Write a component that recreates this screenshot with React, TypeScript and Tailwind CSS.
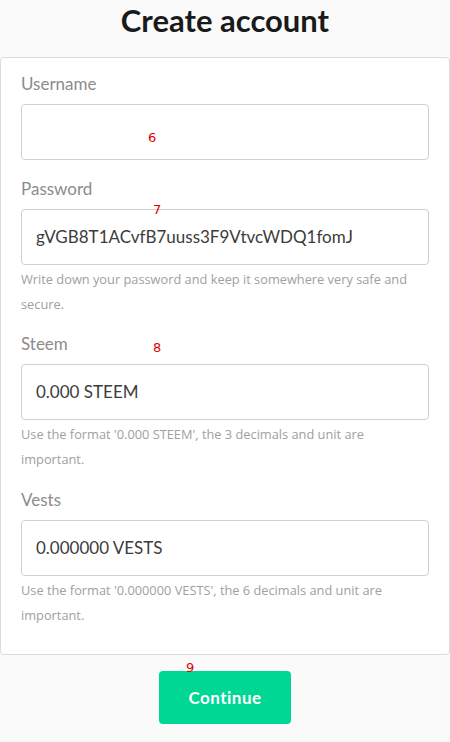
export default function App() {
  const fields = [
    { label: "Username", value: "", help: "" },
    {
      label: "Password",
      value: "gVGB8T1ACvfB7uuss3F9VtvcWDQ1fomJ",
      help: "Write down your password and keep it somewhere very safe and secure.",
    },
    {
      label: "Steem",
      value: "0.000 STEEM",
      help: "Use the format '0.000 STEEM', the 3 decimals and unit are important.",
    },
    {
      label: "Vests",
      value: "0.000000 VESTS",
      help: "Use the format '0.000000 VESTS', the 6 decimals and unit are important.",
    },
  ]

  return (
    <div className="relative min-h-[742px] bg-[#fafafa] font-['Lato',sans-serif]">
      <h1 className="pt-[1px] text-center text-[31px] font-bold leading-[38px] text-[#1a1a1a]">Create account</h1>

      <div className="mt-[18px] flex flex-col rounded-[4px] border border-[#dcdcdc] bg-white px-5 pb-[26px] pt-[14px]">
        {fields.map((f, i) => (
          <div key={i} className={i === 0 ? "" : i === 1 ? "mt-[17px]" : i === 2 ? "mt-[15px]" : "mt-[16px]"}>
            <label className="block text-[17px] leading-[24px] text-[#8c8c8c]">{f.label}</label>
            <div className="mt-[8px] flex h-[56px] items-center rounded-[4px] border border-[#cfcfd4] px-[14px] text-[17px] text-[#3c3c3c]">
              {f.value}
            </div>
            {f.help && (
              <p className="mt-[2px] font-['Open_Sans',sans-serif] text-[12.8px] leading-[25px] text-[#a0a0a0]">{f.help}</p>
            )}
          </div>
        ))}
      </div>

      <div className="mt-[16px] flex justify-center">
        <button className="h-[53px] w-[132px] rounded-[4px] bg-[#00d794] text-[17px] font-bold tracking-[0.5px] text-white">
          Continue
        </button>
      </div>

      <span className="absolute left-[148px] top-[128px] font-['DejaVu_Sans',sans-serif] text-[13px] text-[#e00000]">6</span>
      <span className="absolute left-[153px] top-[200px] font-['DejaVu_Sans',sans-serif] text-[13px] text-[#e00000]">7</span>
      <span className="absolute left-[153px] top-[338px] font-['DejaVu_Sans',sans-serif] text-[13px] text-[#e00000]">8</span>
      <span className="absolute left-[186px] top-[658px] font-['DejaVu_Sans',sans-serif] text-[13px] text-[#e00000]">9</span>
    </div>
  )
}
